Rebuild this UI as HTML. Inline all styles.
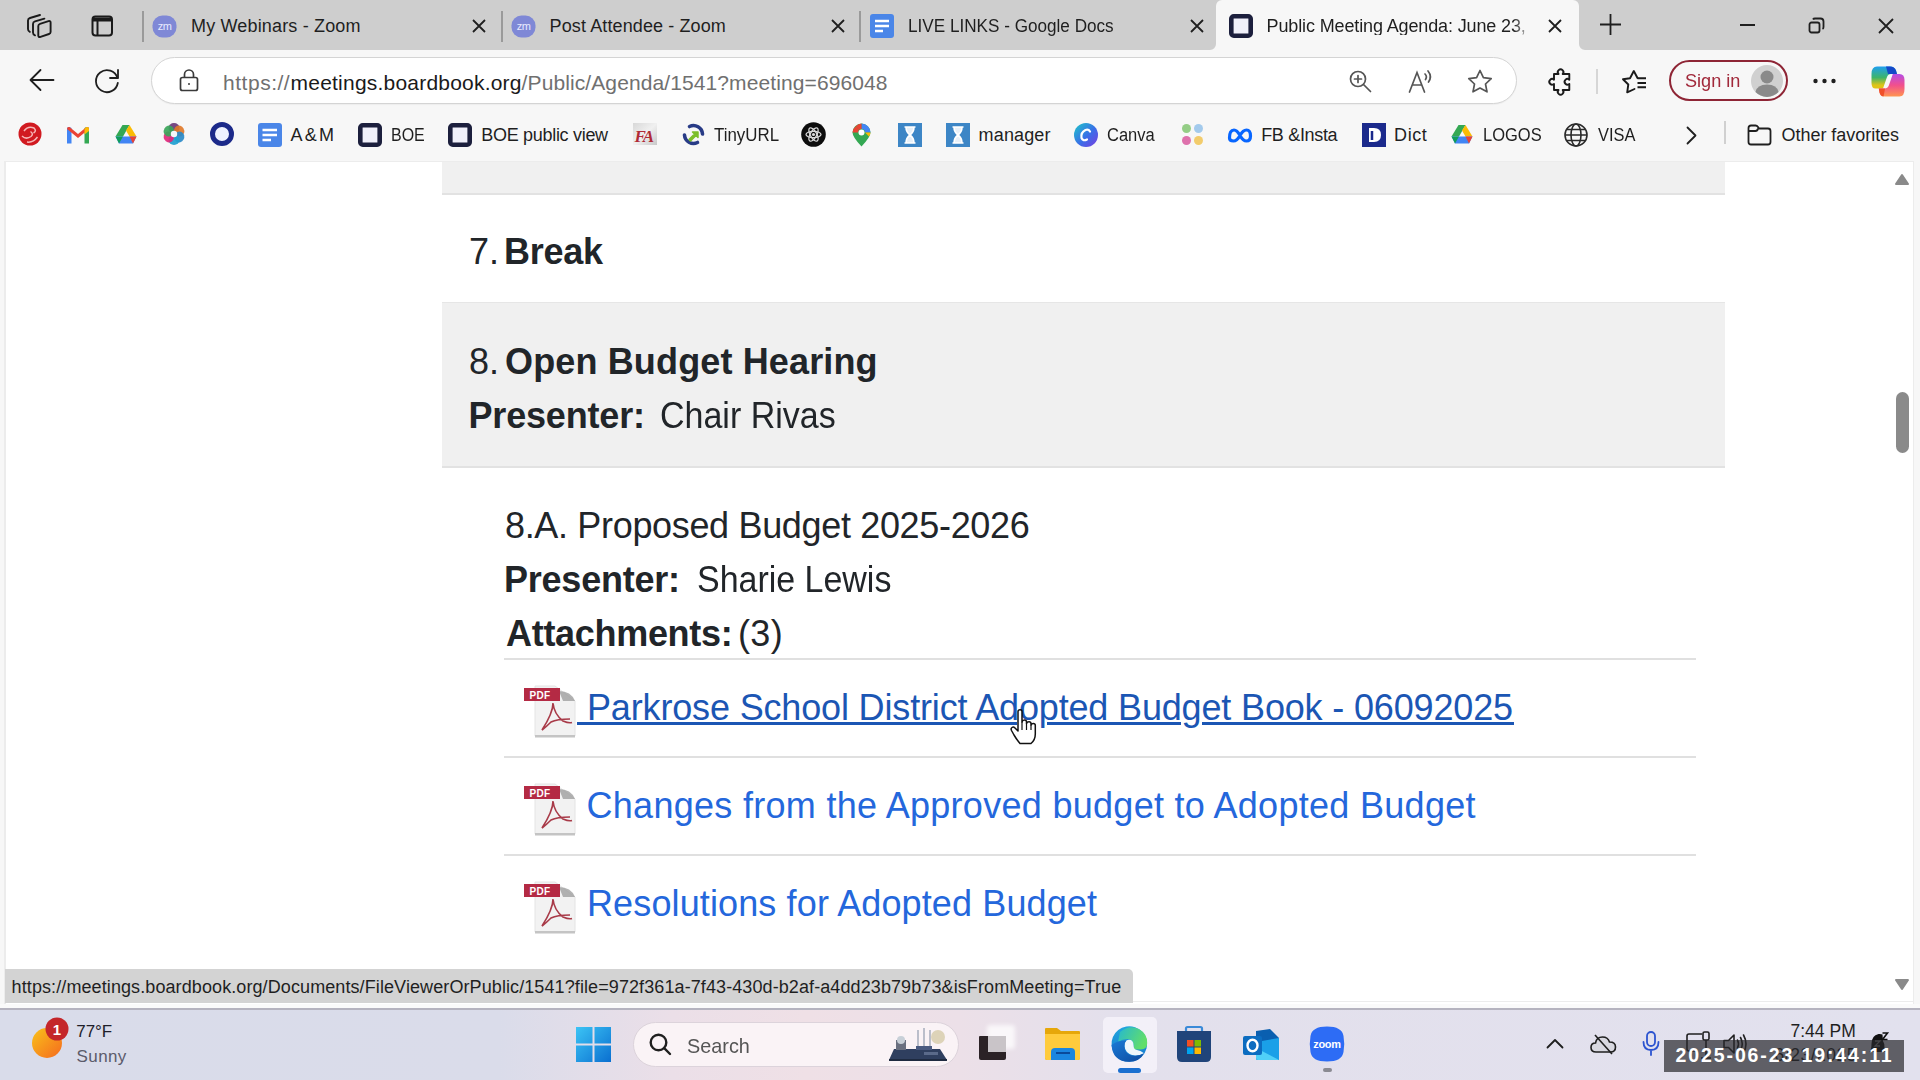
<!DOCTYPE html>
<html><head><meta charset="utf-8">
<style>
*{box-sizing:border-box}
html,body{margin:0;padding:0;width:1920px;height:1080px;overflow:hidden;background:#f7f7f7;font-family:"Liberation Sans",sans-serif}
.a{position:absolute}
.t{position:absolute;white-space:pre;font-family:"Liberation Sans",sans-serif}
svg{position:absolute;overflow:visible}
</style></head><body>
<!-- tab bar -->
<div class="a" style="left:0;top:0;width:1920px;height:50px;background:#cecece"></div>
<!-- active tab -->
<div class="a" style="left:1216px;top:0;width:363px;height:50px;background:#f7f7f7;border-radius:6px 6px 0 0"></div>
<svg style="left:1210px;top:44px" width="6" height="6"><path d="M6 0 V6 H0 A6 6 0 0 0 6 0Z" fill="#f7f7f7"/></svg>
<svg style="left:1579px;top:44px" width="6" height="6"><path d="M0 0 V6 H6 A6 6 0 0 1 0 0Z" fill="#f7f7f7"/></svg>
<!-- toolbar & bookmarks bg -->
<div class="a" style="left:0;top:50px;width:1920px;height:111px;background:#f7f7f7"></div>
<!-- content -->
<div class="a" style="left:4px;top:161px;width:1910px;height:844px;background:#fff;border-top:1px solid #ececec;border-left:2px solid #ececec;border-right:1px solid #ececec"></div>
<!-- gray boxes -->
<div class="a" style="left:442px;top:162px;width:1283px;height:33px;background:#f0f0f0;border-bottom:2px solid #e2e2e2"></div>
<div class="a" style="left:442px;top:302px;width:1283px;height:166px;background:#f0f0f0;border-top:1px solid #e6e6e6;border-bottom:2px solid #e2e2e2"></div>
<!-- separators -->
<div class="a" style="left:504px;top:658px;width:1192px;height:2px;background:#e0e0e0"></div>
<div class="a" style="left:504px;top:756px;width:1192px;height:2px;background:#e0e0e0"></div>
<div class="a" style="left:504px;top:854px;width:1192px;height:2px;background:#e0e0e0"></div>
<!-- underline -->
<div class="a" style="left:577px;top:722px;width:440px;height:3px;background:#1b56b4"></div>
<div class="a" style="left:1047px;top:722px;width:134px;height:3px;background:#1b56b4"></div>
<div class="a" style="left:1202px;top:722px;width:312px;height:3px;background:#1b56b4"></div>
<!-- scrollbar -->
<svg style="left:1895px;top:174px" width="14" height="12"><path d="M7 1 L13 10 H1Z" fill="#8a8a8a" stroke="#8a8a8a" stroke-linejoin="round" stroke-width="2"/></svg>
<div class="a" style="left:1896px;top:392px;width:13px;height:61px;background:#8a8a8a;border-radius:7px"></div>
<svg style="left:1895px;top:979px" width="14" height="12"><path d="M7 10 L13 1 H1Z" fill="#8a8a8a" stroke="#8a8a8a" stroke-linejoin="round" stroke-width="2"/></svg>
<!-- status bubble -->
<div class="a" style="left:5px;top:969px;width:1128px;height:34px;background:#d3d3d3;border-radius:0 5px 0 0"></div>
<!-- taskbar -->
<div class="a" style="left:1133px;top:1001px;width:781px;height:1px;background:#ececec"></div>
<div class="a" style="left:0;top:1004px;width:1920px;height:4px;background:#fafafa"></div>
<div class="a" style="left:0;top:1008px;width:1920px;height:2px;background:#b5b3bf"></div>
<div class="a" style="left:0;top:1010px;width:1920px;height:70px;background:linear-gradient(90deg,#d9dcea 0%,#dadcea 26%,#ebdfe8 35%,#efe0e6 42%,#ece0e8 50%,#e3e0ec 58%,#e2e1ee 100%)"></div>
<!-- search pill -->
<div class="a" style="left:633px;top:1022px;width:326px;height:45px;background:#faf3f6;border-radius:23px;border:1px solid #dcd3db"></div>

<!-- tab bar icons -->
<svg style="left:26px;top:13px" width="27" height="27" viewBox="0 0 27 27" fill="none" stroke="#1a1a1a" stroke-width="1.9" stroke-linejoin="round" stroke-linecap="round">
 <path d="M12.3 13 Q12.3 11.3 14 10.8 L22.5 8.2 Q24.6 7.6 24.6 9.6 V19 Q24.6 20.5 23 21 L14.5 23.8 Q12.3 24.5 12.3 22.5 Z"/>
 <path d="M18.4 5.6 L9 8.4 Q7 9 7 11 V19.5 Q7 21.5 9 22.3"/>
 <path d="M14 2 L4 5 Q2 5.6 2 7.6 V16 Q2 18 3.8 18.8"/>
</svg>
<svg style="left:91px;top:15px" width="23" height="22" viewBox="0 0 23 22" fill="none" stroke="#1a1a1a" stroke-width="2">
 <rect x="1.5" y="1.5" width="19.5" height="19" rx="3"/>
 <path d="M1.5 4.5 H21" stroke-width="4"/>
 <path d="M6.5 4 V20.5"/>
</svg>
<div class="a" style="left:142px;top:11px;width:1.5px;height:31px;background:#9a9a9a"></div>
<div class="a" style="left:501px;top:11px;width:1.5px;height:31px;background:#9a9a9a"></div>
<div class="a" style="left:859px;top:11px;width:1.5px;height:31px;background:#9a9a9a"></div>
<!-- zoom favicons -->
<svg style="left:152px;top:15px" width="25" height="23" viewBox="0 0 25 23"><rect x="0.5" y="0.5" width="24" height="22" rx="10" fill="#7f88d6"/><text x="12.5" y="15" font-family="Liberation Sans" font-size="11" fill="#e8eaff" text-anchor="middle" letter-spacing="-0.6">zm</text></svg>
<svg style="left:511px;top:15px" width="25" height="23" viewBox="0 0 25 23"><rect x="0.5" y="0.5" width="24" height="22" rx="10" fill="#7f88d6"/><text x="12.5" y="15" font-family="Liberation Sans" font-size="11" fill="#e8eaff" text-anchor="middle" letter-spacing="-0.6">zm</text></svg>
<!-- docs favicon -->
<svg style="left:870px;top:14px" width="24" height="24" viewBox="0 0 24 24"><rect x="0" y="0" width="24" height="24" rx="3" fill="#4a86e8"/><path d="M5 7 H19 M5 12 H19 M5 17 H13" stroke="#fff" stroke-width="2.6"/></svg>
<!-- boardbook favicon -->
<svg style="left:1229px;top:14px" width="24" height="24" viewBox="0 0 24 24"><rect x="2.3" y="2.3" width="19.4" height="19.4" rx="2.5" fill="#f0f0fa" stroke="#1c1f3d" stroke-width="4.6"/></svg>
<!-- close x's -->
<svg style="left:472px;top:19px" width="14" height="14" viewBox="0 0 14 14" stroke="#1f1f1f" stroke-width="1.8"><path d="M1 1 L13 13 M13 1 L1 13"/></svg>
<svg style="left:831px;top:19px" width="14" height="14" viewBox="0 0 14 14" stroke="#1f1f1f" stroke-width="1.8"><path d="M1 1 L13 13 M13 1 L1 13"/></svg>
<svg style="left:1190px;top:19px" width="14" height="14" viewBox="0 0 14 14" stroke="#1f1f1f" stroke-width="1.8"><path d="M1 1 L13 13 M13 1 L1 13"/></svg>
<svg style="left:1548px;top:19px" width="14" height="14" viewBox="0 0 14 14" stroke="#1f1f1f" stroke-width="1.8"><path d="M1 1 L13 13 M13 1 L1 13"/></svg>
<!-- new tab + -->
<svg style="left:1600px;top:14px" width="21" height="21" viewBox="0 0 21 21" stroke="#1f1f1f" stroke-width="1.8"><path d="M10.5 0 V21 M0 10.5 H21"/></svg>
<!-- window controls -->
<div class="a" style="left:1740px;top:24px;width:15px;height:2px;background:#1f1f1f"></div>
<svg style="left:1808px;top:17px" width="17" height="17" viewBox="0 0 17 17" fill="none" stroke="#1f1f1f" stroke-width="1.8"><rect x="1.5" y="5.5" width="10" height="10" rx="2"/><path d="M5 2.5 Q5.5 1.5 7 1.5 H12.5 Q15.5 1.5 15.5 4.5 V10 Q15.5 11.5 14.5 12"/></svg>
<svg style="left:1878px;top:18px" width="16" height="16" viewBox="0 0 16 16" stroke="#1f1f1f" stroke-width="1.8"><path d="M1 1 L15 15 M15 1 L1 15"/></svg>
<!-- toolbar -->
<svg style="left:29px;top:68px" width="26" height="24" viewBox="0 0 26 24" fill="none" stroke="#1f1f1f" stroke-width="1.8" stroke-linecap="round" stroke-linejoin="round"><path d="M24.5 12 H2 M11.5 2 L1.5 12 L11.5 22"/></svg>
<svg style="left:95px;top:68px" width="26" height="26" viewBox="0 0 26 26" fill="none" stroke="#1f1f1f" stroke-width="1.8" stroke-linecap="round"><path d="M22.5 10 A11 11 0 1 0 22.8 15"/><path d="M23 2 V10 H15" stroke-linejoin="round"/></svg>
<!-- address bar -->
<div class="a" style="left:151px;top:57px;width:1366px;height:47px;background:#fff;border:1px solid #d4d4d4;border-radius:24px;box-shadow:0 1px 1px rgba(0,0,0,0.04)"></div>
<svg style="left:179px;top:68px" width="20" height="24" viewBox="0 0 20 24" fill="none" stroke="#3a3a3a" stroke-width="1.7"><path d="M5.5 9.5 V6.5 A4.5 4.5 0 0 1 14.5 6.5 V9.5"/><rect x="1.5" y="9.5" width="17" height="13" rx="2"/><circle cx="10" cy="16" r="1" fill="#3a3a3a" stroke="none"/></svg>
<svg style="left:1349px;top:70px" width="24" height="24" viewBox="0 0 24 24" fill="none" stroke="#555" stroke-width="1.7" stroke-linecap="round"><circle cx="9" cy="9" r="7.5"/><path d="M14.5 14.5 L21.5 21.5 M9 5.5 V12.5 M5.5 9 H12.5"/></svg>
<svg style="left:1408px;top:68px" width="28" height="26" viewBox="0 0 28 26" fill="none" stroke="#555" stroke-width="1.7" stroke-linecap="round"><path d="M1.5 24 L9 4.5 L16.5 24 M4.5 17 H13.5"/><path d="M17 6 Q19.5 8.5 17.5 11.5 M20 3 Q24.5 8.5 20.5 14"/></svg>
<svg style="left:1467px;top:69px" width="26" height="25" viewBox="0 0 26 25" fill="none" stroke="#555" stroke-width="1.7" stroke-linejoin="round"><path d="M13 1.5 L16.4 8.6 L24.2 9.6 L18.5 15 L20 22.8 L13 19 L6 22.8 L7.5 15 L1.8 9.6 L9.6 8.6 Z"/></svg>
<svg style="left:1549px;top:69px" width="24" height="25" viewBox="0 0 24 25" fill="none" stroke="#1a1a1a" stroke-width="1.9" stroke-linejoin="round"><path d="M5 5 H9.5 A2.8 2.8 0 1 1 13.7 5 H20.3 V10.7 A2.8 2.8 0 1 0 20.3 14.9 V21 H13.7 A2.8 2.8 0 1 1 9.5 21 H5 V14.9 A2.8 2.8 0 1 1 5 10.7 Z"/></svg>
<div class="a" style="left:1596px;top:69px;width:1.5px;height:25px;background:#d6d6d6"></div>
<svg style="left:1620px;top:68px" width="28" height="27" viewBox="0 0 28 27" fill="none" stroke="#1a1a1a" stroke-width="1.9" stroke-linejoin="round" stroke-linecap="round"><path d="M17.5 10 L13.8 3 L10 10.2 L3 11.3 L8.3 16.5 L7.2 24.3 L14.5 21"/><path d="M17.5 10.2 H26 M17.5 15 H26 M17.5 19.3 H26" stroke-linecap="butt"/></svg>
<!-- sign in pill -->
<div class="a" style="left:1669px;top:60px;width:119px;height:41px;border:2px solid #8e2535;border-radius:21px"></div>
<svg style="left:1751px;top:65px" width="32" height="32" viewBox="0 0 32 32"><circle cx="16" cy="16" r="16" fill="#d0d0d0"/><circle cx="16" cy="12" r="6.5" fill="#8a8a8a"/><path d="M4.5 27 Q6 19.5 16 19.5 Q26 19.5 27.5 27 A16 16 0 0 1 4.5 27Z" fill="#8a8a8a"/></svg>
<svg style="left:1813px;top:78px" width="23" height="6" viewBox="0 0 23 6" fill="#1f1f1f"><circle cx="2.5" cy="3" r="2.2"/><circle cx="11.5" cy="3" r="2.2"/><circle cx="20.5" cy="3" r="2.2"/></svg>
<!-- copilot -->
<svg style="left:1871px;top:66px" width="34" height="31" viewBox="0 0 34 31">
 <defs>
  <linearGradient id="cp1" x1="0" y1="0" x2="0" y2="1"><stop offset="0" stop-color="#1e9ff0"/><stop offset="0.5" stop-color="#3db46a"/><stop offset="0.85" stop-color="#e0c416"/></linearGradient>
  <linearGradient id="cp2" x1="0" y1="0" x2="0" y2="1"><stop offset="0" stop-color="#b54de6"/><stop offset="0.5" stop-color="#f2508c"/><stop offset="1" stop-color="#ff9550"/></linearGradient>
 </defs>
 <path d="M6 0.5 H19 Q23.5 0.5 25 4.5 L26 8 H20 Q17 8 16 11 L12 22.5 H4.5 Q0.5 22.5 0.5 17 V8 Q0.5 0.5 6 0.5Z" fill="url(#cp1)"/>
 <path d="M15 0.5 H19 Q23.5 0.5 25 4.5 L26 8 H17Z" fill="#1448c8"/>
 <path d="M28.5 30.5 H14 Q9.5 30.5 8.5 26.5 L7.8 22.5 H13.5 Q16.8 22.5 17.8 19.5 L21.8 8 H28.5 Q33.5 8 33.5 14 V23 Q33.5 30.5 28.5 30.5Z" fill="url(#cp2)"/>
 <path d="M8.5 26.5 L7.8 22.5 H14 L12.5 30.5 Q9.5 30.5 8.5 26.5Z" fill="#f0502a"/>
</svg>


<!-- bookmark icons -->
<svg style="left:18px;top:122px" width="24" height="24" viewBox="0 0 24 24"><circle cx="12" cy="12" r="11.5" fill="#d11a20"/><path d="M6 9 Q10 3.5 16 6 Q19 9 15.5 11 M4 14 Q8 18 13 14.5 Q16 12 12.5 9.5 M9 20 Q15 21 19.5 15" fill="none" stroke="#f7b7b7" stroke-width="1.5"/></svg>
<svg style="left:67px;top:126px" width="22" height="18" viewBox="0 0 22 18"><path d="M0 3 Q0 0.5 2.5 1 L4.5 2 V17.5 H0Z" fill="#4285f4"/><path d="M17.5 2 L19.5 1 Q22 0.5 22 3 V17.5 H17.5Z" fill="#34a853"/><path d="M0 3 Q0 0.5 2.5 1 L11 8 L19.5 1 Q22 0.5 22 3 L11 12Z" fill="#ea4335"/><path d="M17.5 2.8 L19.5 1 Q22 0.5 22 3 V5 L17.5 8.5Z" fill="#fbbc04"/></svg>
<svg style="left:115px;top:125px" width="22" height="19" viewBox="0 0 22 19"><path d="M7.5 0 H14.5 L8 11.5 H0.5Z" fill="#34a853"/><path d="M14.5 0 L21.5 11.5 H14.5 L11 5.5Z" fill="#fbbc04"/><path d="M0.5 11.5 H21.5 L18 18.5 H4Z" fill="#4285f4"/><path d="M14.5 11.5 H21.5 L18 18.5Z" fill="#ea4335"/><path d="M0.5 11.5 H8 L4 18.5Z" fill="#0f9d58"/></svg>
<svg style="left:162px;top:122px" width="24" height="24" viewBox="0 0 24 24"><ellipse cx="12" cy="6" rx="5.5" ry="5" fill="#6b3a78" transform="rotate(0 12 12)" opacity="0.92"/><ellipse cx="12" cy="6" rx="5.5" ry="5" fill="#e07a2a" transform="rotate(60 12 12)" opacity="0.92"/><ellipse cx="12" cy="6" rx="5.5" ry="5" fill="#2a8ac8" transform="rotate(120 12 12)" opacity="0.92"/><ellipse cx="12" cy="6" rx="5.5" ry="5" fill="#1fa0d0" transform="rotate(180 12 12)" opacity="0.92"/><ellipse cx="12" cy="6" rx="5.5" ry="5" fill="#e0287a" transform="rotate(240 12 12)" opacity="0.92"/><ellipse cx="12" cy="6" rx="5.5" ry="5" fill="#3ba55a" transform="rotate(300 12 12)" opacity="0.92"/><circle cx="12" cy="12" r="3.2" fill="#f4f6f8"/></svg>
<svg style="left:210px;top:122px" width="24" height="24" viewBox="0 0 24 24"><circle cx="12" cy="12" r="9.5" fill="#eef2ff" stroke="#1c2a8a" stroke-width="5"/></svg>
<svg style="left:258px;top:123px" width="24" height="24" viewBox="0 0 24 24"><rect width="24" height="24" rx="3" fill="#4a86e8"/><path d="M4.5 7 H19 M4.5 12 H19 M4.5 17 H13" stroke="#fff" stroke-width="2.6"/></svg>
<svg style="left:358px;top:123px" width="24" height="24" viewBox="0 0 24 24"><rect x="2.3" y="2.3" width="19.4" height="19.4" rx="2.5" fill="#f0f0fa" stroke="#1c1f3d" stroke-width="4.6"/></svg>
<svg style="left:448px;top:123px" width="24" height="24" viewBox="0 0 24 24"><rect x="2.3" y="2.3" width="19.4" height="19.4" rx="2.5" fill="#f0f0fa" stroke="#1c1f3d" stroke-width="4.6"/></svg>
<svg style="left:633px;top:123px" width="24" height="22" viewBox="0 0 24 22"><defs><linearGradient id="fag" x1="0" y1="0" x2="1" y2="1"><stop offset="0" stop-color="#d8d8d8"/><stop offset="0.5" stop-color="#f0f0f0"/><stop offset="1" stop-color="#c8c8c8"/></linearGradient></defs><rect width="24" height="22" fill="url(#fag)"/><text x="1.5" y="18.5" font-family="Liberation Serif" font-weight="700" font-style="italic" font-size="17" fill="#b02a36" letter-spacing="-1.5">FA</text></svg>
<svg style="left:681px;top:122px" width="25" height="25" viewBox="0 0 25 25" fill="none"><path d="M8.5 4.5 A9 9 0 0 1 21.5 12" stroke="#283b86" stroke-width="3.6" stroke-linecap="round"/><path d="M16.5 20.5 A9 9 0 0 1 3.5 13" stroke="#283b86" stroke-width="3.6" stroke-linecap="round"/><path d="M8 17.5 L13.5 12 L11.5 10 H17 V15.5 L15 13.5 L9.5 19Z" fill="#7cbf2a" stroke="#7cbf2a" stroke-width="1.5" stroke-linejoin="round"/></svg>
<svg style="left:801px;top:122px" width="25" height="25" viewBox="0 0 25 25"><circle cx="12.5" cy="12.5" r="12.3" fill="#0d0d0d"/><g fill="none" stroke="#d8d8d8" stroke-width="1.3"><ellipse cx="12.5" cy="12.5" rx="7.5" ry="3.2" transform="rotate(0 12.5 12.5)"/><ellipse cx="12.5" cy="12.5" rx="7.5" ry="3.2" transform="rotate(60 12.5 12.5)"/><ellipse cx="12.5" cy="12.5" rx="7.5" ry="3.2" transform="rotate(120 12.5 12.5)"/></g><circle cx="12.5" cy="12.5" r="1.6" fill="#d8d8d8"/></svg>
<svg style="left:852px;top:123px" width="19" height="24" viewBox="0 0 19 24"><path d="M9.5 0.5 A9 9 0 0 1 18.5 9.5 Q18.5 14 9.5 23.5 Q0.5 14 0.5 9.5 A9 9 0 0 1 9.5 0.5Z" fill="#34a853"/><path d="M9.5 0.5 A9 9 0 0 1 18.5 9.5 L13 9.5 A3.5 3.5 0 0 0 9.5 6Z" fill="#4285f4"/><path d="M0.5 9.5 A9 9 0 0 1 4 3 L7 7 A3.5 3.5 0 0 0 6 9.5Z" fill="#ea4335"/><path d="M4 3 A9 9 0 0 1 9.5 0.5 V6 A3.5 3.5 0 0 0 7 7Z" fill="#ea4335"/><path d="M18.5 9.5 Q18.5 11 17 13.5 L13 9.5Z" fill="#fbbc04"/><circle cx="9.5" cy="9.5" r="3" fill="#fff"/></svg>
<svg style="left:898px;top:123px" width="24" height="24" viewBox="0 0 24 24"><rect width="24" height="24" fill="#3d86c6"/><path d="M6.5 4 H17.5 M6.5 20 H17.5 M8 4 Q8 9 12 12 Q16 9 16 4 M8 20 Q8 15 12 12 Q16 15 16 20" fill="#e8f0f8" stroke="#fff" stroke-width="1.6"/></svg>
<svg style="left:946px;top:123px" width="24" height="24" viewBox="0 0 24 24"><rect width="24" height="24" fill="#3d86c6"/><path d="M6.5 4 H17.5 M6.5 20 H17.5 M8 4 Q8 9 12 12 Q16 9 16 4 M8 20 Q8 15 12 12 Q16 15 16 20" fill="#e8f0f8" stroke="#fff" stroke-width="1.6"/></svg>
<svg style="left:1074px;top:123px" width="24" height="24" viewBox="0 0 24 24"><defs><linearGradient id="cv" x1="0" y1="0" x2="1" y2="1"><stop offset="0" stop-color="#1ec8c8"/><stop offset="0.55" stop-color="#3a6ee8"/><stop offset="1" stop-color="#7a3de0"/></linearGradient></defs><circle cx="12" cy="12" r="12" fill="url(#cv)"/><path d="M16 8.5 Q14.5 6 11.5 7 Q6.5 9.5 7.5 15 Q9 18.5 13 16.5" fill="none" stroke="#fff" stroke-width="2.2" stroke-linecap="round"/></svg>
<svg style="left:1181px;top:123px" width="23" height="23" viewBox="0 0 23 23" opacity="0.8"><circle cx="5.5" cy="5.5" r="4.5" fill="#7cc36a"/><circle cx="17.5" cy="5.5" r="4.5" fill="#8fc0ea"/><circle cx="5.5" cy="17.5" r="4.5" fill="#d8509a"/><circle cx="17.5" cy="17.5" r="4.5" fill="#f2c24a"/></svg>
<svg style="left:1227px;top:128px" width="26" height="15" viewBox="0 0 26 15" fill="none"><path d="M2.5 10 Q2.5 2 7 2 Q10 2 13 7.5 Q16 13 19.5 13 Q23.5 13 23.5 8 Q23.5 2 19.5 2 Q16 2 13 7.5 Q10 13 6.5 13 Q2.5 13 2.5 10Z" stroke="#0866ff" stroke-width="3.2"/></svg>
<svg style="left:1362px;top:123px" width="24" height="24" viewBox="0 0 24 24"><rect width="24" height="24" fill="#1b2a8c"/><path d="M7 5 H12 Q19 5 19 12 Q19 19 12 19 H7Z" fill="#fff"/><path d="M10 8 V17" stroke="#1b2a8c" stroke-width="2.5"/></svg>
<svg style="left:1451px;top:125px" width="22" height="19" viewBox="0 0 22 19"><path d="M7.5 0 H14.5 L8 11.5 H0.5Z" fill="#34a853"/><path d="M14.5 0 L21.5 11.5 H14.5 L11 5.5Z" fill="#fbbc04"/><path d="M0.5 11.5 H21.5 L18 18.5 H4Z" fill="#4285f4"/><path d="M14.5 11.5 H21.5 L18 18.5Z" fill="#ea4335"/><path d="M0.5 11.5 H8 L4 18.5Z" fill="#0f9d58"/></svg>
<svg style="left:1564px;top:123px" width="24" height="24" viewBox="0 0 24 24" fill="none" stroke="#2a2a2a" stroke-width="1.6"><circle cx="12" cy="12" r="11"/><ellipse cx="12" cy="12" rx="5" ry="11"/><path d="M1 12 H23 M3 6.5 H21 M3 17.5 H21"/></svg>
<svg style="left:1686px;top:126px" width="11" height="19" viewBox="0 0 11 19" fill="none" stroke="#1f1f1f" stroke-width="1.8" stroke-linecap="round" stroke-linejoin="round"><path d="M1.5 1.5 L9.5 9.5 L1.5 17.5"/></svg>
<div class="a" style="left:1724px;top:121px;width:1.5px;height:23px;background:#d0d0d0"></div>
<svg style="left:1747px;top:124px" width="25" height="22" viewBox="0 0 25 22" fill="none" stroke="#1f1f1f" stroke-width="1.8" stroke-linejoin="round"><path d="M1.5 4 Q1.5 1.5 4 1.5 H8.5 Q10 1.5 11 3 L12 4.5 H21 Q23.5 4.5 23.5 7 V18 Q23.5 20.5 21 20.5 H4 Q1.5 20.5 1.5 18 Z M1.5 7 H8.5 Q10.5 7 11 4.5"/></svg>


<!-- pdf icons -->
<svg style="left:523px;top:685px" width="54" height="54" viewBox="0 0 54 54">
 <path d="M12 1 H32 L52 16 V51 H12Z" fill="#f2f2f2"/>
 <path d="M12 1 H32 L52 16 V51 H12Z" fill="none" stroke="#e4e4e4" stroke-width="1"/>
 <path d="M36 6 Q48 6 52 16 L40 16 Z" fill="#9a9a9a" opacity="0.75"/>
 <rect x="12" y="50" width="40" height="2.5" fill="#c4c4c4"/>
 <rect x="1" y="3" width="36" height="13" fill="#b42a44"/>
 <text x="17" y="13.6" font-family="Liberation Sans" font-weight="700" font-size="10" fill="#fff" text-anchor="middle" letter-spacing="0.3">PDF</text>
 <path d="M30 18 Q31 29 40 36 Q46 38.5 49 37.5 M30 18 Q30 28 19 45 Q23 42 28 37 Q34 34 47 34" fill="none" stroke="#a83a48" stroke-width="1.6"/>
</svg>
<svg style="left:523px;top:783px" width="54" height="54" viewBox="0 0 54 54">
 <path d="M12 1 H32 L52 16 V51 H12Z" fill="#f2f2f2"/>
 <path d="M12 1 H32 L52 16 V51 H12Z" fill="none" stroke="#e4e4e4" stroke-width="1"/>
 <path d="M36 6 Q48 6 52 16 L40 16 Z" fill="#9a9a9a" opacity="0.75"/>
 <rect x="12" y="50" width="40" height="2.5" fill="#c4c4c4"/>
 <rect x="1" y="3" width="36" height="13" fill="#b42a44"/>
 <text x="17" y="13.6" font-family="Liberation Sans" font-weight="700" font-size="10" fill="#fff" text-anchor="middle" letter-spacing="0.3">PDF</text>
 <path d="M30 18 Q31 29 40 36 Q46 38.5 49 37.5 M30 18 Q30 28 19 45 Q23 42 28 37 Q34 34 47 34" fill="none" stroke="#a83a48" stroke-width="1.6"/>
</svg>
<svg style="left:523px;top:881px" width="54" height="54" viewBox="0 0 54 54">
 <path d="M12 1 H32 L52 16 V51 H12Z" fill="#f2f2f2"/>
 <path d="M12 1 H32 L52 16 V51 H12Z" fill="none" stroke="#e4e4e4" stroke-width="1"/>
 <path d="M36 6 Q48 6 52 16 L40 16 Z" fill="#9a9a9a" opacity="0.75"/>
 <rect x="12" y="50" width="40" height="2.5" fill="#c4c4c4"/>
 <rect x="1" y="3" width="36" height="13" fill="#b42a44"/>
 <text x="17" y="13.6" font-family="Liberation Sans" font-weight="700" font-size="10" fill="#fff" text-anchor="middle" letter-spacing="0.3">PDF</text>
 <path d="M30 18 Q31 29 40 36 Q46 38.5 49 37.5 M30 18 Q30 28 19 45 Q23 42 28 37 Q34 34 47 34" fill="none" stroke="#a83a48" stroke-width="1.6"/>
</svg>


<!-- taskbar icons -->
<svg style="left:31px;top:1027px" width="32" height="32" viewBox="0 0 32 32"><defs><linearGradient id="sun" x1="0" y1="0" x2="1" y2="1"><stop offset="0" stop-color="#f9c21a"/><stop offset="1" stop-color="#f56a1e"/></linearGradient></defs><circle cx="16" cy="16" r="15" fill="url(#sun)"/></svg>
<svg style="left:45px;top:1017px" width="24" height="24" viewBox="0 0 24 24"><circle cx="12" cy="12" r="11.5" fill="#c4262a"/><text x="12" y="17.5" font-family="Liberation Sans" font-size="15" font-weight="700" fill="#fff" text-anchor="middle">1</text></svg>
<svg style="left:576px;top:1027px" width="35" height="35" viewBox="0 0 35 35"><defs><linearGradient id="win" x1="0" y1="0" x2="1" y2="1"><stop offset="0" stop-color="#3cc4f5"/><stop offset="1" stop-color="#0a6fd0"/></linearGradient></defs><path d="M0 0 H16.5 V16.5 H0Z M18.5 0 H35 V16.5 H18.5Z M0 18.5 H16.5 V35 H0Z M18.5 18.5 H35 V35 H18.5Z" fill="url(#win)"/></svg>
<svg style="left:649px;top:1033px" width="23" height="23" viewBox="0 0 23 23" fill="none" stroke="#1f1f1f" stroke-width="2.4" stroke-linecap="round"><circle cx="9.5" cy="9.5" r="7.8"/><path d="M15.2 15.2 L21 21"/></svg>
<svg style="left:888px;top:1027px" width="60" height="34" viewBox="0 0 60 34"><path d="M6 22 L52 22 L59 33 H1Z" fill="#2f3f5f"/><path d="M1 33 H59" stroke="#1e2a40" stroke-width="2"/><rect x="8" y="13" width="10" height="10" fill="#6a7080"/><circle cx="13" cy="13" r="4" fill="#c8d0d8"/><path d="M30 3 V22 M36 1 V22 M42 3 V22" stroke="#a0a8b8" stroke-width="1.4"/><rect x="28" y="19" width="16" height="4" fill="#4a5a80"/><circle cx="50" cy="10" r="7" fill="#ddd3b8"/><rect x="36" y="25" width="14" height="3" fill="#5a6a8a"/></svg>
<!-- task view -->
<div class="a" style="left:987px;top:1025px;width:28px;height:24px;background:rgba(255,255,255,0.75);border-radius:3px;filter:blur(2px)"></div>
<svg style="left:978px;top:1035px" width="29" height="26" viewBox="0 0 29 26"><path d="M2 1 H27 Q28 1 28 2 V23 Q28 25 26 25 H3 Q1 25 1 23 V2 Q1 1 2 1Z" fill="#2b2226"/><rect x="10" y="1" width="18" height="16" fill="#c9c4c8"/></svg>
<!-- explorer -->
<svg style="left:1044px;top:1027px" width="37" height="34" viewBox="0 0 37 34"><path d="M2 1 H13 L17 4 H35 Q36 4 36 5 V31 Q36 33 34 33 H3 Q1 33 1 31 V2 Q1 1 2 1Z" fill="#e6a70a"/><path d="M1 7 H36 V31 Q36 33 34 33 H3 Q1 33 1 31Z" fill="#ffcb3c"/><path d="M7 33 V25 Q7 21 11 21 H27 Q31 21 31 25 V33Z" fill="#1a86e0"/><path d="M12 26 H26" stroke="#0a4a9a" stroke-width="2"/></svg>
<!-- edge active -->
<div class="a" style="left:1103px;top:1017px;width:54px;height:56px;background:rgba(248,246,252,0.75);border-radius:5px"></div>
<svg style="left:1111px;top:1026px" width="37" height="36" viewBox="0 0 37 36">
<defs>
<linearGradient id="eb" x1="0" y1="0" x2="0" y2="1"><stop offset="0" stop-color="#22a6dc"/><stop offset="1" stop-color="#1476d0"/></linearGradient>
<linearGradient id="eg" x1="0" y1="0" x2="1" y2="0.4"><stop offset="0" stop-color="#26b8d0"/><stop offset="1" stop-color="#62de6a"/></linearGradient>
<linearGradient id="ed" x1="0" y1="0" x2="1" y2="1"><stop offset="0" stop-color="#1a7ad6"/><stop offset="1" stop-color="#0e4a9e"/></linearGradient>
</defs>
<path d="M35.52 22.5 A17.8 17.8 0 1 0 33.54 27.2 Z" fill="url(#eb)"/>
<path d="M9 6 Q18 -1.5 28 3 Q36.5 8 36.2 17 Q36 23.5 30 23.5 H24.5 Q22.3 23.5 22.6 20 Q23 13.5 17 13 Q11.5 12.8 7 16 Z" fill="url(#eg)"/>
<path d="M13.5 20 Q13 14 18 13.8 Q22.6 13.8 22.6 19.5 Q22.6 23.6 26 24 Q29.5 24.2 33 27.2 Q27 30.5 21 29 Q14 26.5 13.5 20Z" fill="#eef6fb"/>
<path d="M0.6 19 Q1.5 35.5 18 35.8 Q28 36 33 27.2 Q26.5 31 20.5 29.6 Q13.5 27.5 13.4 20.5 Q13.4 16.5 15.5 14.6 Q6.5 14.5 0.6 19Z" fill="url(#ed)"/>
</svg>
<div class="a" style="left:1118px;top:1068px;width:23px;height:5px;background:#1a6fd0;border-radius:3px"></div>
<!-- store -->
<svg style="left:1176px;top:1026px" width="36" height="37" viewBox="0 0 36 37"><path d="M10 6 V2.5 Q10 1 11.5 1 H24.5 Q26 1 26 2.5 V6" fill="none" stroke="#3a8ad8" stroke-width="2.2"/><path d="M1 5 H35 V31 Q35 36 30 36 H6 Q1 36 1 31Z" fill="#20447a"/><rect x="11" y="14" width="6.5" height="6.5" fill="#f25022"/><rect x="18.5" y="14" width="6.5" height="6.5" fill="#7fba00"/><rect x="11" y="21.5" width="6.5" height="6.5" fill="#00a4ef"/><rect x="18.5" y="21.5" width="6.5" height="6.5" fill="#ffb900"/></svg>
<!-- outlook -->
<svg style="left:1242px;top:1028px" width="38" height="33" viewBox="0 0 38 33"><path d="M14 3 L28 1 L37 10 V31 Q37 32 36 32 H16 Q14 32 14 30Z" fill="#0a5fb0"/><path d="M14 14 L37 10 V31 Q37 32 36 32 H16 Q14 32 14 30Z" fill="#1aa0e8"/><path d="M14 20 L37 32 H16 Q14 32 14 30Z" fill="#50d0f8"/><rect x="1" y="8" width="19" height="19" rx="2" fill="#0c6cc0"/><ellipse cx="10.5" cy="17.5" rx="5" ry="5.8" fill="none" stroke="#fff" stroke-width="2.4"/></svg>
<!-- zoom -->
<svg style="left:1309px;top:1026px" width="36" height="36" viewBox="0 0 36 36"><path d="M18 0.5 Q33 0.5 34.5 10 Q36 18 34.5 26 Q33 35.5 18 35.5 Q3 35.5 1.5 26 Q0 18 1.5 10 Q3 0.5 18 0.5Z" fill="#2d6cf5"/><text x="18" y="21.5" font-family="Liberation Sans" font-size="11" font-weight="700" fill="#fff" text-anchor="middle" letter-spacing="-0.3">zoom</text></svg>
<div class="a" style="left:1323px;top:1068px;width:9px;height:4px;background:#8a8a92;border-radius:2px"></div>
<!-- tray -->
<svg style="left:1546px;top:1038px" width="18" height="11" viewBox="0 0 18 11" fill="none" stroke="#1f1f1f" stroke-width="1.8" stroke-linecap="round" stroke-linejoin="round"><path d="M1.5 9.5 L9 2 L16.5 9.5"/></svg>
<svg style="left:1590px;top:1033px" width="27" height="22" viewBox="0 0 27 22" fill="none" stroke="#1f1f1f" stroke-width="1.6"><path d="M6 19 Q1 19 1 14.5 Q1 10 5.5 10 Q6.5 4 12.5 4 Q18 4 19.5 9 Q25.5 9 25.5 14 Q25.5 19 20.5 19Z" fill="#d8d8e0"/><path d="M5 2 L22 21"/></svg>
<svg style="left:1642px;top:1031px" width="18" height="25" viewBox="0 0 18 25" fill="none" stroke="#2c54d0" stroke-width="1.8" stroke-linecap="round"><rect x="5" y="1" width="8" height="14" rx="4"/><path d="M1.5 11 Q1.5 19 9 19 Q16.5 19 16.5 11 M9 19 V24"/></svg>
<svg style="left:1686px;top:1031px" width="26" height="28" viewBox="0 0 26 28" fill="none" stroke="#1f1f1f" stroke-width="1.6"><path d="M16 3 H3 Q1 3 1 5 V18 Q1 20 3 20 H11"/><rect x="17" y="1" width="6" height="8" rx="1.5"/><path d="M20 9 V27 M15 27 H25"/></svg>
<svg style="left:1723px;top:1033px" width="26" height="22" viewBox="0 0 26 22" fill="none" stroke="#1f1f1f" stroke-width="1.6" stroke-linejoin="round"><path d="M1 7.5 H5.5 L11 2 V20 L5.5 14.5 H1Z"/><path d="M14.5 7 Q16.5 11 14.5 15 M17.5 4.5 Q21 11 17.5 17.5 M20.5 2 Q25.5 11 20.5 20" stroke-linecap="round"/></svg>
<svg style="left:1868px;top:1032px" width="22" height="24" viewBox="0 0 22 24"><path d="M1.5 20 Q3.5 17.5 3.5 12 Q3.5 3.5 10.5 2 Q13 1.8 14.5 2.5 L15 9 Q17 12 16.5 16 Q17 19 18.5 20 Z" fill="#111"/><path d="M7 9 H12 L7 14 H12" fill="none" stroke="#888" stroke-width="1.3"/><path d="M14.5 1 H19.5 L14.5 7.5 H19.5" fill="none" stroke="#111" stroke-width="1.6"/></svg>

<div class="t" style="left:191.0px;top:17.01px;font-size:18px;line-height:18px;font-weight:400;color:#1f1f1f;letter-spacing:0.164px;">My Webinars - Zoom</div>
<div class="t" style="left:549.6px;top:17.01px;font-size:18px;line-height:18px;font-weight:400;color:#1f1f1f;letter-spacing:0.111px;">Post Attendee - Zoom</div>
<div class="t" style="left:907.65px;top:17.01px;font-size:18px;line-height:18px;font-weight:400;color:#1f1f1f;letter-spacing:0px;transform:scaleX(0.9517);transform-origin:0 0;">LIVE LINKS - Google Docs</div>
<div class="t" style="left:1266.6px;top:17.01px;font-size:18px;line-height:18px;font-weight:400;color:#1f1f1f;letter-spacing:-0.133px;width:262px;-webkit-mask-image:linear-gradient(90deg,#000 94%,rgba(0,0,0,0.2) 100%);mask-image:linear-gradient(90deg,#000 94%,rgba(0,0,0,0.2) 100%);">Public Meeting Agenda: June 23,</div>
<div class="t" style="left:223.1px;top:71.81px;font-size:21px;line-height:21px;font-weight:400;color:#707070;letter-spacing:0.501px;">https://</div>
<div class="t" style="left:290.6px;top:71.81px;font-size:21px;line-height:21px;font-weight:400;color:#1a1a1a;letter-spacing:0.21px;">meetings.boardbook.org</div>
<div class="t" style="left:521.6px;top:71.81px;font-size:21px;line-height:21px;font-weight:400;color:#707070;letter-spacing:0.101px;">/Public/Agenda/1541?meeting=696048</div>
<div class="t" style="left:1684.6px;top:71.37px;font-size:19px;line-height:19px;font-weight:400;color:#a1283a;letter-spacing:0px;transform:scaleX(0.9543);transform-origin:0 0;">Sign in</div>
<div class="t" style="left:290.6px;top:126.21px;font-size:18px;line-height:18px;font-weight:400;color:#1f1f1f;letter-spacing:2.244px;">A&amp;M</div>
<div class="t" style="left:391.01px;top:126.21px;font-size:18px;line-height:18px;font-weight:400;color:#1f1f1f;letter-spacing:0px;transform:scaleX(0.889);transform-origin:0 0;">BOE</div>
<div class="t" style="left:481.3px;top:126.21px;font-size:18px;line-height:18px;font-weight:400;color:#1f1f1f;letter-spacing:-0.304px;">BOE public view</div>
<div class="t" style="left:713.6px;top:126.21px;font-size:18px;line-height:18px;font-weight:400;color:#1f1f1f;letter-spacing:0px;transform:scaleX(0.9375);transform-origin:0 0;">TinyURL</div>
<div class="t" style="left:978.6px;top:126.21px;font-size:18px;line-height:18px;font-weight:400;color:#1f1f1f;letter-spacing:0.142px;">manager</div>
<div class="t" style="left:1106.6px;top:126.21px;font-size:18px;line-height:18px;font-weight:400;color:#1f1f1f;letter-spacing:0px;transform:scaleX(0.9166);transform-origin:0 0;">Canva</div>
<div class="t" style="left:1261.2px;top:126.21px;font-size:18px;line-height:18px;font-weight:400;color:#1f1f1f;letter-spacing:-0.328px;">FB &amp;Insta</div>
<div class="t" style="left:1394.1px;top:126.21px;font-size:18px;line-height:18px;font-weight:400;color:#1f1f1f;letter-spacing:0.567px;">Dict</div>
<div class="t" style="left:1482.68px;top:126.21px;font-size:18px;line-height:18px;font-weight:400;color:#1f1f1f;letter-spacing:0px;transform:scaleX(0.9173);transform-origin:0 0;">LOGOS</div>
<div class="t" style="left:1597.9px;top:126.21px;font-size:18px;line-height:18px;font-weight:400;color:#1f1f1f;letter-spacing:0px;transform:scaleX(0.9119);transform-origin:0 0;">VISA</div>
<div class="t" style="left:1781.5px;top:126.21px;font-size:18px;line-height:18px;font-weight:400;color:#1f1f1f;letter-spacing:-0.032px;">Other favorites</div>
<div class="t" style="left:469px;top:233.71px;font-size:36px;line-height:36px;font-weight:400;color:#212529;letter-spacing:0px;">7.</div>
<div class="t" style="left:504px;top:233.71px;font-size:36px;line-height:36px;font-weight:700;color:#212529;letter-spacing:-0.263px;">Break</div>
<div class="t" style="left:469px;top:344.01px;font-size:36px;line-height:36px;font-weight:400;color:#212529;letter-spacing:0px;">8.</div>
<div class="t" style="left:505px;top:344.01px;font-size:36px;line-height:36px;font-weight:700;color:#212529;letter-spacing:0.143px;">Open Budget Hearing</div>
<div class="t" style="left:468.5px;top:398.01px;font-size:36px;line-height:36px;font-weight:700;color:#212529;letter-spacing:-0.177px;">Presenter:</div>
<div class="t" style="left:659.66px;top:398.01px;font-size:36px;line-height:36px;font-weight:400;color:#212529;letter-spacing:0px;transform:scaleX(0.9443);transform-origin:0 0;">Chair Rivas</div>
<div class="t" style="left:505px;top:507.51px;font-size:36px;line-height:36px;font-weight:400;color:#212529;letter-spacing:-0.334px;">8.A. Proposed Budget 2025-2026</div>
<div class="t" style="left:504px;top:562.01px;font-size:36px;line-height:36px;font-weight:700;color:#212529;letter-spacing:-0.233px;">Presenter:</div>
<div class="t" style="left:696.56px;top:562.01px;font-size:36px;line-height:36px;font-weight:400;color:#212529;letter-spacing:0px;transform:scaleX(0.9431);transform-origin:0 0;">Sharie Lewis</div>
<div class="t" style="left:506px;top:616.01px;font-size:36px;line-height:36px;font-weight:700;color:#212529;letter-spacing:-0.304px;">Attachments:</div>
<div class="t" style="left:738px;top:616.01px;font-size:36px;line-height:36px;font-weight:400;color:#212529;letter-spacing:0.345px;">(3)</div>
<div class="t" style="left:587px;top:690.01px;font-size:36px;line-height:36px;font-weight:400;color:#1b56b4;letter-spacing:-0.158px;">Parkrose School District Adopted Budget Book - 06092025</div>
<div class="t" style="left:586.5px;top:788.01px;font-size:36px;line-height:36px;font-weight:400;color:#2467dc;letter-spacing:0.293px;">Changes from the Approved budget to Adopted Budget</div>
<div class="t" style="left:587px;top:886.31px;font-size:36px;line-height:36px;font-weight:400;color:#2467dc;letter-spacing:0.126px;">Resolutions for Adopted Budget</div>
<div class="t" style="left:11.6px;top:977.51px;font-size:18px;line-height:18px;font-weight:400;color:#1f1f1f;letter-spacing:0.096px;">https://meetings.boardbook.org/Documents/FileViewerOrPublic/1541?file=972f361a-7f43-430d-b2af-a4dd23b79b73&amp;isFromMeeting=True</div>
<div class="t" style="left:76.3px;top:1023.04px;font-size:17px;line-height:17px;font-weight:400;color:#1f1f2a;letter-spacing:-0.069px;">77°F</div>
<div class="t" style="left:76.6px;top:1047.54px;font-size:17px;line-height:17px;font-weight:400;color:#5b5b6b;letter-spacing:0.374px;">Sunny</div>
<div class="t" style="left:686.6px;top:1034.51px;font-size:21px;line-height:21px;font-weight:400;color:#555555;letter-spacing:0px;transform:scaleX(0.9445);transform-origin:0 0;">Search</div>
<div class="t" style="left:1790.4px;top:1023.42px;font-size:17.5px;line-height:17.5px;font-weight:400;color:#1f1f1f;letter-spacing:0.034px;">7:44 PM</div>
<div class="t" style="left:1774.6px;top:1047.42px;font-size:17.5px;line-height:17.5px;font-weight:400;color:#1f1f1f;letter-spacing:0.51px;">6/23/2025</div>

<!--TOP-->
<svg style="left:1010px;top:709px" width="28" height="36" viewBox="0 0 28 36"><path d="M8 2.5 Q8 0.8 10 0.8 Q12 0.8 12 2.5 V13 Q12.5 11 14.5 11 Q16.5 11 16.5 13 V14.5 Q17 12.8 19 12.8 Q21 12.8 21 14.8 V16 Q21.5 14.5 23.3 14.5 Q25.3 14.5 25.3 16.5 V25 Q25.3 31 21 34.5 H10 Q7 31 4 26 L1.5 21.5 Q0.5 19.5 2 18.5 Q3.5 17.5 5 19 L8 22Z" fill="#fff" stroke="#111" stroke-width="1.5" stroke-linejoin="round"/><path d="M12 13 V21 M16.5 14.5 V21 M21 16 V21" stroke="#111" stroke-width="1.2"/></svg>
<div class="a" style="left:1664px;top:1040px;width:240px;height:32px;background:rgba(40,40,44,0.7)"></div>
<div class="t" style="left:1675.6px;top:1046.06px;font-size:19.5px;line-height:19.5px;font-weight:700;color:#ffffff;letter-spacing:1.883px;">2025-06-23 19:44:11</div>
</body></html>
